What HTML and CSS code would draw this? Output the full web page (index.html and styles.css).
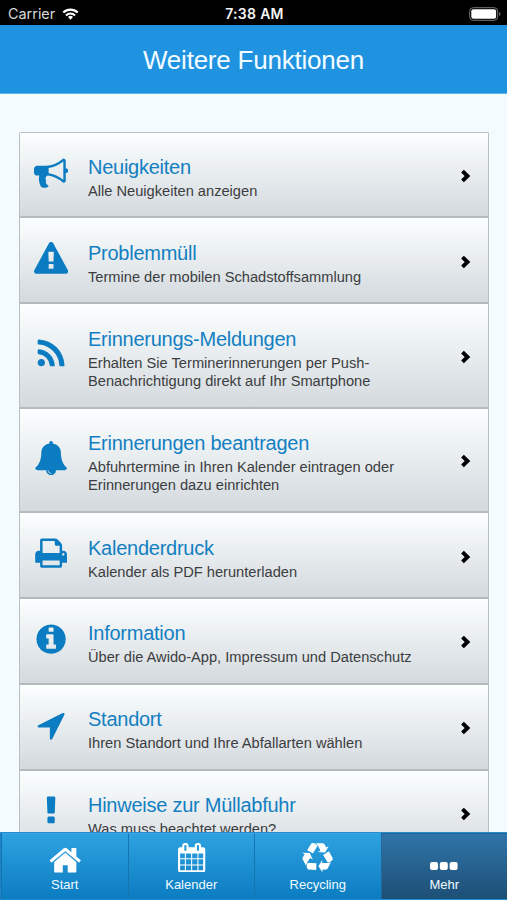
FILE: index.html
```html
<!DOCTYPE html>
<html lang="de">
<head>
<meta charset="utf-8">
<title>Weitere Funktionen</title>
<link rel="stylesheet" href="styles.css">
</head>
<body>
<div class="app">
  <div class="status">
    <div class="carrier"><span>Carrier</span>
      <svg class="wifi" viewBox="0 0 18 13"><g fill="none" stroke="#fff" stroke-width="2.3"><path d="M1.2 4.9a11.2 11.2 0 0 1 15.6 0"/><path d="M4.1 8a7 7 0 0 1 9.8 0"/></g><path fill="#fff" d="M9 12.6L6.3 9.8a3.8 3.8 0 0 1 5.400 0z"/></svg>
    </div>
    <span class="clock">7:38 AM</span>
    <div class="power"><svg class="battery" viewBox="0 0 32 14"><rect x=".7" y=".7" width="28" height="12.600" rx="3.500" fill="none" stroke="#777" stroke-width="1"/><rect x="2.300" y="2.300" width="24.800" height="9.400" rx="2" fill="#fff"/><path d="M30.200 5v4q1.300-.6 1.300-2t-1.300-2z" fill="#777"/></svg></div>
  </div>
  <header class="header"><h1>Weitere Funktionen</h1></header>
  <main class="content">
    <ul class="list">
      <li class="row">
        <svg class="icon" viewBox="0 0 1792 1792"><path d="M1664 640q53 0 90.500 37.500t37.500 90.500-37.500 90.500-90.500 37.500v384q0 52-38 90t-90 38q-417-347-812-380-58 19-91 66t-31 100.500 40 92.500q-20 33-23 65.500t6 58 33.500 55 48 50 61.500 50.500q-29 58-111.500 83t-168.500 11.500-132-55.500q-7-23-29.500-87.500t-32-94.500-23-89-15-101 3.500-98.500 22-110.500h-122q-66 0-113-47t-47-113v-192q0-66 47-113t113-47h480q435 0 896-384 52 0 90 38t38 90v384zm-128 604v-954q-394 302-768 343v270q377 42 768 341z"/></svg>
        <div class="text"><h2>Neuigkeiten</h2><p>Alle Neuigkeiten anzeigen</p></div>
        <svg class="chevron" viewBox="0 0 12 14"><path d="M2.500 2.200L7.500 7l-5 4.800"/></svg>
      </li>
      <li class="row">
        <svg class="icon" viewBox="0 0 1792 1792"><path d="M1024 1375v-190q0-14-9.500-23.500t-22.500-9.500h-192q-13 0-22.500 9.500t-9.500 23.500v190q0 14 9.500 23.500t22.500 9.500h192q13 0 22.500-9.500t9.500-23.500zm-2-374l18-459q0-12-10-19-13-11-24-11h-220q-11 0-24 11-10 7-10 21l17 457q0 10 10 16.500t24 6.500h185q14 0 23.500-6.500t10.500-16.500zm-14-934l768 1408q35 63-2 126-17 29-46.500 46t-63.500 17h-1536q-34 0-63.500-17t-46.500-46q-37-63-2-126l768-1408q17-31 47-49t65-18 65 18 47 49z"/></svg>
        <div class="text"><h2>Problemmüll</h2><p>Termine der mobilen Schadstoffsammlung</p></div>
        <svg class="chevron" viewBox="0 0 12 14"><path d="M2.500 2.200L7.500 7l-5 4.800"/></svg>
      </li>
      <li class="row tall">
        <svg class="icon" viewBox="0 0 1792 1792"><path d="M576 1344q0 80-56 136t-136 56-136-56-56-136 56-136 136-56 136 56 56 136zm512 123q2 28-17 48-18 21-47 21h-135q-25 0-43-16.500t-20-41.500q-22-229-184.500-391.500t-391.500-184.500q-25-2-41.500-20t-16.500-43v-135q0-29 21-47 17-17 43-17h5q160 13 306 80.500t259 181.500q114 113 181.500 259t80.500 306zm512 2q2 27-18 47-18 20-46 20h-143q-26 0-44.500-17.500t-19.500-42.500q-12-215-101-408.500t-231.500-336-336-231.500-408.500-102q-25-1-42.500-19.500t-17.500-43.500v-143q0-28 20-46 18-18 44-18h3q262 13 501.500 120t425.500 294q187 186 294 425.500t120 501.500z"/></svg>
        <div class="text"><h2>Erinnerungs-Meldungen</h2><p>Erhalten Sie Terminerinnerungen per Push-<br>Benachrichtigung direkt auf Ihr Smartphone</p></div>
        <svg class="chevron" viewBox="0 0 12 14"><path d="M2.500 2.200L7.500 7l-5 4.800"/></svg>
      </li>
      <li class="row tall">
        <svg class="icon" viewBox="0 0 1792 1792"><path d="M912 1696q0-16-16-16-59 0-101.500-42.500t-42.500-101.500q0-16-16-16t-16 16q0 73 51.500 124.500t124.500 51.500q16 0 16-16zm816-288q0 52-38 90t-90 38h-448q0 106-75 181t-181 75-181-75-75-181h-448q-52 0-90-38t-38-90q50-42 91-88t85-119.500 74.500-158.500 50-206 19.500-260q0-152 117-282.500t307-158.500q-8-19-8-39 0-40 28-68t68-28 68 28 28 68q0 20-8 39 190 28 307 158.500t117 282.500q0 139 19.500 260t50 206 74.500 158.500 85 119.500 91 88z"/></svg>
        <div class="text"><h2>Erinnerungen beantragen</h2><p>Abfuhrtermine in Ihren Kalender eintragen oder<br>Erinnerungen dazu einrichten</p></div>
        <svg class="chevron" viewBox="0 0 12 14"><path d="M2.500 2.200L7.500 7l-5 4.800"/></svg>
      </li>
      <li class="row">
        <svg class="icon" viewBox="0 0 1792 1792"><path d="M448 1536h896v-256h-896v256zm0-640h896v-384h-160q-40 0-68-28t-28-68v-160h-640v640zm1152 64q0-26-19-45t-45-19-45 19-19 45 19 45 45 19 45-19 19-45zm128 0v416q0 13-9.500 22.500t-22.500 9.500h-224v160q0 40-28 68t-68 28h-960q-40 0-68-28t-28-68v-160h-224q-13 0-22.500-9.500t-9.500-22.500v-416q0-79 56.500-135.500t135.500-56.500h64v-544q0-40 28-68t68-28h672q40 0 88 20t76 48l152 152q28 28 48 76t20 88v256h64q79 0 135.500 56.500t56.500 135.500z"/></svg>
        <div class="text"><h2>Kalenderdruck</h2><p>Kalender als PDF herunterladen</p></div>
        <svg class="chevron" viewBox="0 0 12 14"><path d="M2.500 2.200L7.500 7l-5 4.800"/></svg>
      </li>
      <li class="row">
        <svg class="icon" viewBox="0 0 1792 1792"><path d="M1152 1376v-160q0-14-9-23t-23-9h-96v-512q0-14-9-23t-23-9h-320q-14 0-23 9t-9 23v160q0 14 9 23t23 9h96v320h-96q-14 0-23 9t-9 23v160q0 14 9 23t23 9h448q14 0 23-9t9-23zm-128-896v-160q0-14-9-23t-23-9h-192q-14 0-23 9t-9 23v160q0 14 9 23t23 9h192q14 0 23-9t9-23zm640 416q0 209-103 385.500t-279.500 279.500-385.500 103-385.500-103-279.500-279.500-103-385.500 103-385.500 279.500-279.500 385.500-103 385.500 103 279.500 279.500 103 385.500z"/></svg>
        <div class="text"><h2>Information</h2><p>Über die Awido-App, Impressum und Datenschutz</p></div>
        <svg class="chevron" viewBox="0 0 12 14"><path d="M2.500 2.200L7.500 7l-5 4.800"/></svg>
      </li>
      <li class="row">
        <svg class="icon" viewBox="0 0 1792 1792"><path d="M1593 349l-640 1280q-17 35-57 35-5 0-15-2-22-5-35.500-22.500t-13.500-39.500v-576h-576q-22 0-39.500-13.500t-22.500-35.500 4-42 29-30l1280-640q13-7 29-7 27 0 45 19 15 14 18.500 34.500t-6.500 39.500z"/></svg>
        <div class="text"><h2>Standort</h2><p>Ihren Standort und Ihre Abfallarten wählen</p></div>
        <svg class="chevron" viewBox="0 0 12 14"><path d="M2.500 2.200L7.500 7l-5 4.800"/></svg>
      </li>
      <li class="row">
        <svg class="icon" viewBox="0 0 1792 1792"><path d="M1088 1248v224q0 26-19 45t-45 19h-256q-26 0-45-19t-19-45v-224q0-26 19-45t45-19h256q26 0 45 19t19 45zm30-1056l-28 768q-1 26-20.500 45t-45.500 19h-256q-26 0-45.500-19t-20.500-45l-28-768q-1-26 17.500-45t44.500-19h320q26 0 44.500 19t17.500 45z"/></svg>
        <div class="text"><h2>Hinweise zur Müllabfuhr</h2><p>Was muss beachtet werden?</p></div>
        <svg class="chevron" viewBox="0 0 12 14"><path d="M2.500 2.200L7.500 7l-5 4.800"/></svg>
      </li>
    </ul>
  </main>
  <nav class="tabs">
    <a class="tab"><span class="glyph"><svg class="home" viewBox="0 0 1792 1792"><path d="M1472 992v480q0 26-19 45t-45 19h-384v-384h-256v384h-384q-26 0-45-19t-19-45v-480q0-1 .5-3t.5-3l575-474 575 474q1 2 1 6zm223-69l-62 74q-8 9-21 11h-3q-13 0-21-7l-692-577-692 577q-12 8-24 7-13-2-21-11l-62-74q-8-10-7-23.500t11-21.500l719-599q32-26 76-26t76 26l244 204v-195q0-14 9-23t23-9h192q14 0 23 9t9 23v408l219 182q10 8 11 21.500t-7 23.500z"/></svg></span><span class="label">Start</span></a>
    <a class="tab"><span class="glyph"><svg class="calendar" viewBox="0 0 1792 1792"><path d="M192 1664h288v-288h-288v288zm352 0h320v-288h-320v288zm-352-352h288v-320h-288v320zm352 0h320v-320h-320v320zm-352-384h288v-288h-288v288zm736 736h320v-288h-320v288zm-384-736h320v-288h-320v288zm768 736h288v-288h-288v288zm-384-352h320v-320h-320v320zm-352-864v-288q0-13-9.500-22.500t-22.500-9.500h-64q-13 0-22.500 9.500t-9.500 22.500v288q0 13 9.500 22.500t22.500 9.500h64q13 0 22.500-9.500t9.500-22.500zm736 864h288v-320h-288v320zm-384-384h320v-288h-320v288zm384 0h288v-288h-288v288zm32-480v-288q0-13-9.500-22.500t-22.500-9.500h-64q-13 0-22.500 9.500t-9.500 22.500v288q0 13 9.500 22.500t22.500 9.500h64q13 0 22.500-9.500t9.500-22.500zm384-64v1280q0 52-38 90t-90 38h-1408q-52 0-90-38t-38-90v-1280q0-52 38-90t90-38h128v-96q0-66 47-113t113-47h64q66 0 113 47t47 113v96h384v-96q0-66 47-113t113-47h64q66 0 113 47t47 113v96h128q52 0 90 38t38 90z"/></svg></span><span class="label">Kalender</span></a>
    <a class="tab"><span class="glyph"><svg class="recycle" viewBox="0 0 1792 1792"><path d="M836 1169l-15 368-2 22-420-29q-36-3-67-31.500t-47-65.500q-11-27-14.500-55t4-65 12-55 21.500-64 19-53q78 12 509 28zm-387-586l180 379-147-92q-63 72-111.500 144.500t-72.500 125-39.500 94.500-18.500 63l-4 21-190-357q-17-26-18-56t6-47l8-18q35-63 114-188l-140-86zm1231 517l-188 359q-12 29-36.500 46.500t-43.500 20.500l-18 4q-71 7-219 12l8 164-230-367 211-362 7 173q170 16 283 5t170-33zm-785-924q-47 63-265 435l-317-187-19-12 225-356q20-31 60-45t80-10q24 2 48.500 12t42 21 41.500 33 36 34.500 36 39.500 32 35zm655 307l212 363q18 37 12.500 76t-27.500 74q-13 20-33 37t-38 28-48.500 22-47 16-51.500 14-46 12q-34-72-265-436l313-195zm-143-226l142-83-220 373-419-20 151-86q-34-89-75-166t-75.500-123.500-64.500-80-47-46.500l-17-13 405 1q31-3 58 10.500t39 28.500l11 15q39 61 112 190z"/></svg></span><span class="label">Recycling</span></a>
    <a class="tab active"><span class="glyph"><svg class="dots" viewBox="0 0 28 8"><rect width="8" height="8" rx="2"/><rect x="9.800" width="8" height="8" rx="2"/><rect x="19.600" width="8" height="8" rx="2"/></svg></span><span class="label">Mehr</span></a>
  </nav>
</div>
</body>
</html>
```
FILE: styles.css
```css
* { box-sizing: border-box; }
body { margin: 0; font-family: "Liberation Sans", Arial, sans-serif; }
h1, h2, p, ul { margin: 0; padding: 0; font-weight: 400; }
svg { display: block; }

.app { width: 507px; height: 900px; display: flex; flex-direction: column; overflow: hidden; background: #f3fbff; }

.status {
  flex: none; height: 25px; padding: 2px 6px 0 8px;
  display: grid; grid-template-columns: 1fr auto 1fr; align-items: center;
  background: #000; color: #f4f4f4; font: 15px Inter, "Liberation Sans", sans-serif;
}
.carrier { display: flex; align-items: center; gap: 7px; font-size: 14.4px; color: #d8d8d8; }
.wifi { width: 17px; height: 12px; }
.clock { font-size: 14px; font-weight: 600; letter-spacing: .3px; }
.power { display: flex; justify-content: flex-end; }
.battery { width: 32px; height: 14px; }

.header {
  flex: none; height: 69px; padding-top: 3px;
  display: flex; align-items: center; justify-content: center;
  background: #1f93df; border-bottom: 1px solid #55b3ee;
}
.header h1 { font-size: 26px; letter-spacing: -.22px; color: #f2fbff; }

.content { flex: 1; min-height: 0; overflow: hidden; padding: 37.500px 18.500px 0 19px; }
.list { list-style: none; border: 1.500px solid #b9bec2; border-bottom: 0; border-radius: 2px 2px 0 0; }
.row {
  height: 85.900px; padding: 0 16px 0 14px; display: flex; align-items: center;
  border-bottom: 2px solid #b5babd;
  background: linear-gradient(#fbffff, #d4d9de);
}
.row.tall { height: 104.400px; }
.icon { flex: none; width: 34.200px; height: 34.200px; margin: 0 19.800px 3px 0; fill: #0b7cc1; }
.text { flex: 1; padding-top: 6px; }
.text h2 { font-size: 20px; line-height: 24px; letter-spacing: -.25px; color: #137fc2; white-space: nowrap; }
.text p { font-size: 14.650px; line-height: 18px; margin-top: 3px; color: #3b3d40; white-space: nowrap; }
.chevron { flex: none; width: 12px; height: 14px; margin-top: 3px; fill: none; stroke: #000; stroke-width: 3.900; }

.tabs {
  flex: none; height: 68.500px; padding-left: 1px;
  display: grid; grid-template-columns: repeat(4, 1fr);
  background: #1b83c6; border-top: 1.500px solid #258cd0; border-bottom: 1.500px solid #218ccf;
}
.tab {
  display: flex; flex-direction: column; align-items: center;
  border-left: 1px solid #1674b1; border-top: 1px solid #3aa6e4;
  background: linear-gradient(#2ea2e1, #0b7cc0); color: #f1faff;
}
.tab.active { background: linear-gradient(#2f75a9, #1d4f75); border-color: #286594; }
.glyph { height: 42px; padding-top: 9px; display: flex; align-items: flex-start; }
.glyph svg { fill: #fff; }
.home { width: 34.500px; height: 34.500px; margin-top: 0; }
.calendar { width: 29.300px; height: 29.300px; }
.recycle { width: 31px; height: 31px; }
.dots { width: 28px; height: 8px; margin-top: 19px; }
.label { font-size: 13px; line-height: 15px; margin-top: 1px; }
```
